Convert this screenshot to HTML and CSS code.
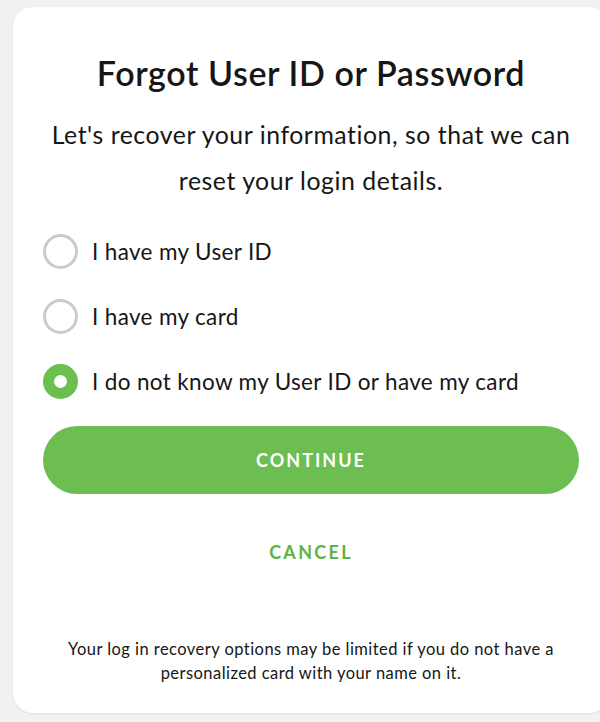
FILE: index.html
```html
<!DOCTYPE html>
<html lang="en">
<head>
<meta charset="utf-8">
<title>Forgot User ID or Password</title>
<link rel="stylesheet" href="styles.css">
</head>
<body>
<main class="card">
  <h1 class="title">Forgot User ID or Password</h1>
  <p class="subtitle">Let's recover your information, so that we can reset your login details.</p>
  <ul class="options">
    <li class="option"><span class="radio"></span><span class="label">I have my User ID</span></li>
    <li class="option"><span class="radio"></span><span class="label">I have my card</span></li>
    <li class="option"><span class="radio radio-on"></span><span class="label">I do not know my User ID or have my card</span></li>
  </ul>
  <button class="btn-continue" type="button">CONTINUE</button>
  <div class="cancel">CANCEL</div>
  <p class="note">Your log in recovery options may be limited if you do not have a personalized card with your name on it.</p>
</main>
</body>
</html>
```

FILE: styles.css
```css
html, body {
  margin: 0;
  padding: 0;
  overflow: hidden;
}
body {
  background: #f0f1f0;
  font-family: Lato, "Open Sans", sans-serif;
  color: #161616;
  width: 600px;
  height: 722px;
}
.card {
  box-sizing: border-box;
  margin: 7px 0 0 13px;
  width: 596px;
  height: 706px;
  background: #ffffff;
  border-radius: 20px;
  box-shadow: 0 1px 2px rgba(0,0,0,0.08);
  padding: 48px 30px 0 30px;
  display: flex;
  flex-direction: column;
  align-items: center;
}
.title {
  margin: 0;
  font-size: 34px;
  line-height: 36px;
  font-weight: 600;
  letter-spacing: 0.6px;
  text-align: center;
  white-space: nowrap;
}
.subtitle {
  margin: 21px 0 0 0;
  font-size: 24.8px;
  line-height: 46px;
  letter-spacing: 0.55px;
  text-align: center;
  width: 536px;
}
.options {
  list-style: none;
  margin: 15px 0 0 0;
  padding: 0;
  align-self: stretch;
}
.option {
  height: 65px;
  display: flex;
  align-items: center;
}
.radio {
  box-sizing: border-box;
  width: 35px;
  height: 35px;
  border-radius: 50%;
  border: 3px solid #c9cccd;
  flex: none;
}
.radio-on {
  border: 11px solid #6abf4d;
  background: #ffffff;
}
.label {
  margin-left: 14px;
  font-size: 22.5px;
  letter-spacing: 0.35px;
}
.btn-continue {
  margin-top: 12px;
  align-self: stretch;
  height: 68px;
  border: none;
  border-radius: 34px;
  background: #6cbe51;
  color: #ffffff;
  font-family: inherit;
  font-size: 18px;
  font-weight: 700;
  letter-spacing: 2px;
}
.cancel {
  margin-top: 48px;
  font-size: 18px;
  line-height: 20px;
  font-weight: 700;
  letter-spacing: 2.3px;
  color: #5db343;
}
.note {
  margin: 75px 0 0 0;
  font-size: 16.5px;
  line-height: 24px;
  letter-spacing: 0.45px;
  text-align: center;
  width: 520px;
}
```
